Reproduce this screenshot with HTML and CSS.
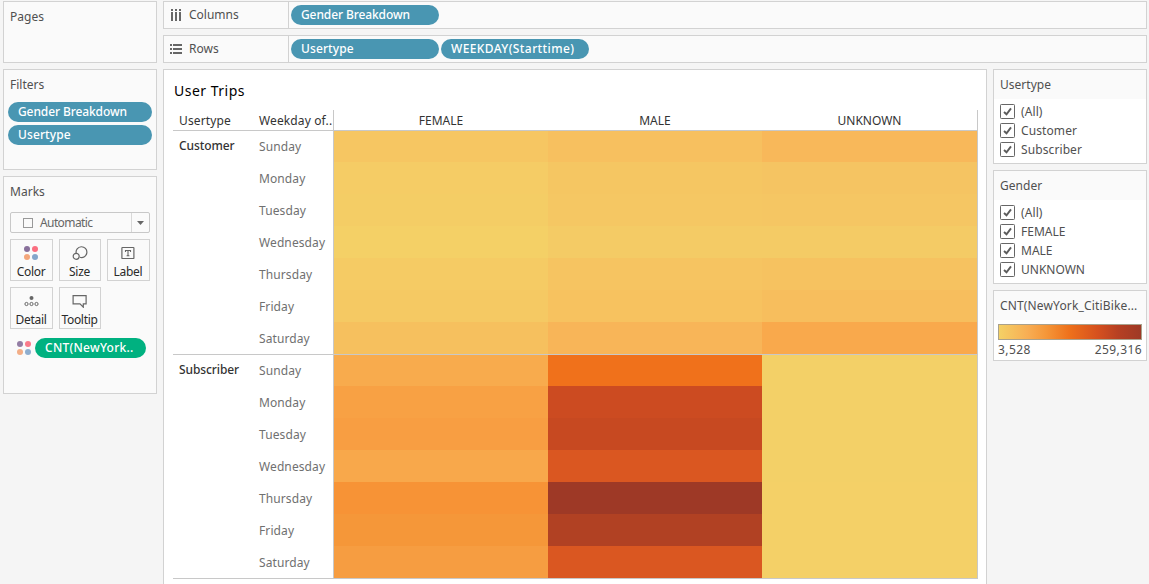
FILE: index.html
```html
<!DOCTYPE html>
<html lang="en">
<head>
<meta charset="utf-8">
<title>User Trips</title>
<link rel="stylesheet" href="styles.css">
</head>
<body>
<svg width="0" height="0" class="defs">
  <symbol id="dots" viewBox="0 0 14 14"><circle cx="3" cy="3" r="3" fill="#88709b"/><circle cx="11" cy="3" r="3" fill="#fa6e80"/><circle cx="3" cy="11" r="3" fill="#f3a67b"/><circle cx="11" cy="11" r="3" fill="#83a6cb"/></symbol>
  <symbol id="check" viewBox="0 0 15 15"><rect x=".5" y=".5" width="14" height="14" rx=".8" fill="#fff" stroke="#666"/><path d="M4 8l2.500 2.300L11 4.400" fill="none" stroke="#5c5c5c" stroke-width="1.9"/></symbol>
</svg>
<div class="app">
  <aside class="left">
    <section class="card pages"><h2>Pages</h2></section>
    <section class="card filters">
      <h2>Filters</h2>
      <div class="pill tight">Gender Breakdown</div>
      <div class="pill">Usertype</div>
    </section>
    <section class="card marks">
      <h2>Marks</h2>
      <div class="select"><span class="square"></span><span class="value">Automatic</span><span class="arrow"><svg width="7" height="4"><path d="M0 0h7L3.500 4z" fill="#666"/></svg></span></div>
      <div class="buttons">
        <div class="btn"><svg width="14" height="14"><use href="#dots"/></svg><span>Color</span></div>
        <div class="btn"><svg width="16" height="14" viewBox="0 0 16 14" fill="none" stroke="#666" stroke-width="1.2"><path d="M4.200 7.300a5.400 5.400 0 1 1 3.700 4"/><circle cx="4.200" cy="10.300" r="3"/></svg><span>Size</span></div>
        <div class="btn"><svg width="14" height="14" viewBox="0 0 14 14" fill="none" stroke="#666"><rect x=".9" y="1.5" width="12" height="11" rx=".6" stroke-width="1.2"/><path d="M4.500 6V4.500h5V6M7 4.500v5.300M5.600 9.800h2.800" stroke-width="1.100"/></svg><span>Label</span></div>
        <div class="btn"><svg width="15" height="14" viewBox="0 0 15 14" fill="none" stroke="#666"><circle cx="7.500" cy="4" r="2" fill="#666" stroke="none"/><circle cx="2.500" cy="10" r="1.600"/><circle cx="7.500" cy="10" r="1.600"/><circle cx="12.500" cy="10" r="1.600"/></svg><span>Detail</span></div>
        <div class="btn"><svg width="15" height="14" viewBox="0 0 15 14" fill="none" stroke="#666" stroke-width="1.2"><path d="M1.100 1.600h13v8.300h-2.800v3.300L8 9.900H1.100z"/></svg><span>Tooltip</span></div>
      </div>
      <div class="encoding"><svg width="14" height="14" opacity=".9"><use href="#dots"/></svg><div class="pill green">CNT(NewYork..</div></div>
    </section>
  </aside>

  <div class="work">
    <div class="shelf">
      <div class="shelf-name"><svg width="13" height="13" fill="#666"><path d="M1 0h2v2H1zM5 0h2v2H5zM9 0h2v2H9zM1 3h2v9H1zM5 3h2v9H5zM9 3h2v9H9z"/></svg>Columns</div>
      <div class="pill tight">Gender Breakdown</div>
    </div>
    <div class="shelf">
      <div class="shelf-name"><svg width="13" height="13" fill="#666"><path d="M0 1h2v2H0zM0 5h2v2H0zM0 9h2v2H0zM3 1h9v2H3zM3 5h9v2H3zM3 9h9v2H3z"/></svg>Rows</div>
      <div class="pill">Usertype</div>
      <div class="pill wide">WEEKDAY(Starttime)</div>
    </div>
    <div class="lower">
      <main class="view">
        <h1>User Trips</h1>
        <div class="table">
          <div class="head">
            <div class="type">Usertype</div><div class="day">Weekday of..</div>
            <div class="cols"><span>FEMALE</span><span>MALE</span><span>UNKNOWN</span></div>
          </div>
          <div id="groups"></div>
        </div>
      </main>
      <aside class="right">
        <section class="card legend">
          <h2>Usertype</h2>
          <ul><li><svg width="15" height="15"><use href="#check"/></svg>(All)</li><li><svg width="15" height="15"><use href="#check"/></svg>Customer</li><li><svg width="15" height="15"><use href="#check"/></svg>Subscriber</li></ul>
        </section>
        <section class="card legend">
          <h2>Gender</h2>
          <ul><li><svg width="15" height="15"><use href="#check"/></svg>(All)</li><li class="caps"><svg width="15" height="15"><use href="#check"/></svg>FEMALE</li><li class="caps"><svg width="15" height="15"><use href="#check"/></svg>MALE</li><li class="caps"><svg width="15" height="15"><use href="#check"/></svg>UNKNOWN</li></ul>
        </section>
        <section class="card legend scale">
          <h2>CNT(NewYork_CitiBike...</h2>
          <div class="ramp"></div>
          <div class="range"><span>3,528</span><span>259,316</span></div>
        </section>
      </aside>
    </div>
  </div>
</div>
<script src="heatmap.js"></script>
</body>
</html>
```
FILE: styles.css
```css
* { box-sizing: border-box; }
body { margin: 0; background: #f5f5f5; font: 12px/16px "Noto Sans", "Open Sans", sans-serif; color: #505050; overflow: hidden; }
h1, h2, ul { margin: 0; padding: 0; font-weight: 400; list-style: none; }
svg { display: block; flex: none; }
.defs { position: absolute; }
.app { display: flex; gap: 6px; width: 1149px; height: 584px; padding: 1px 2px 0 3px; overflow: hidden; }
.left { width: 154px; flex: none; display: flex; flex-direction: column; gap: 6px; }
.card { border: 1px solid #d2d2d2; background: #fafafa; }
.card h2 { font-size: 12px; line-height: 16px; padding: 7px 6px 0; letter-spacing: .02px; white-space: nowrap; }
.pages { height: 62px; }
.filters { height: 101px; }
.filters .pill { margin: 3px 4px 0; }
.filters h2 + .pill { margin-top: 9px; }
.marks { height: 218px; }
.pill { height: 20px; border-radius: 10px; background: #4996b2; color: #fff; padding: 0 10px; font-weight: 500; line-height: 19px; letter-spacing: .1px; white-space: nowrap; }
.pill.tight { letter-spacing: -.1px; }
.pill.wide { letter-spacing: .4px; }
.select { display: flex; align-items: center; height: 21px; margin: 12px 6px 0; border: 1px solid #c8c8c8; border-radius: 2px; color: #666; }
.square { width: 10px; height: 10px; border: 1px solid #999; margin-left: 12px; }
.value { flex: 1; margin-left: 7px; padding-top: 1px; letter-spacing: -.6px; }
.arrow { width: 18px; height: 19px; border-left: 1px solid #d8d8d8; display: flex; align-items: center; justify-content: center; }
.buttons { display: grid; grid-template-columns: 43px 42px 43px; column-gap: 6px; row-gap: 6px; margin: 6px 0 0 6px; }
.btn { height: 42px; border: 1px solid #d2d2d2; display: flex; flex-direction: column; align-items: center; padding: 6px 1px 0 0; color: #2a2a2a; }
.btn span { margin-top: 4px; letter-spacing: -.3px; }
.encoding { display: flex; align-items: center; margin: 9px 0 0 13px; gap: 4px; }
.green { width: 111px; background: #00b180; letter-spacing: .26px; }

.work { width: 984px; flex: none; display: flex; flex-direction: column; gap: 6px; }
.shelf { height: 28px; flex: none; display: flex; align-items: center; border: 1px solid #d2d2d2; background: #fafafa; }
.shelf-name { width: 125px; height: 26px; display: flex; align-items: center; gap: 6px; padding-left: 6px; border-right: 1px solid #d2d2d2; margin-right: 2px; font-size: 12px; letter-spacing: 0; }
.shelf .pill { width: 148px; margin-right: 2px; }
.lower { display: flex; gap: 6px; }
.view { width: 824px; height: 530px; border: 1px solid #d2d2d2; background: #fff; padding: 10px 9px 0; }
h1 { font-size: 14px; line-height: 22px; padding-left: 1px; color: #000; letter-spacing: .5px; }
.table { width: 805px; margin-top: 8px; border-bottom: 1px solid #c8c8c8; color: #707070; }
.head { display: flex; height: 20px; color: #333; line-height: 21px; }
.type { width: 80px; padding-left: 6px; flex: none; color: #333; }
.head .type, .head .day { letter-spacing: .12px; }
.day { width: 80px; padding-left: 6px; flex: none; white-space: nowrap; }
.cols { display: grid; grid-template-columns: 214px 214px 215px; width: 645px; text-align: center; border: solid #c8c8c8; border-width: 0 1px; }
.group { display: flex; border-top: 1px solid #c8c8c8; margin-bottom: -1px; height: 225px; overflow: hidden; }
.group + .group { position: relative; }
.group .type { padding-top: 7px; font-weight: 500; letter-spacing: -.1px; }
.days .day { height: 32px; line-height: 32px; letter-spacing: .1px; }
.group .cols { grid-template-rows: 31px repeat(6, 32px); }
.right { width: 154px; display: flex; flex-direction: column; gap: 6px; }
.legend { background: #fff; }
.legend h2 { height: 29px; background: #fafafa; }
.scale h2 { letter-spacing: .15px; }
.legend ul { padding: 3px 6px 4px; }
.legend li { display: flex; align-items: center; height: 19px; gap: 6px; letter-spacing: .1px; }
.legend li.caps { letter-spacing: 0; }
.scale { height: 71px; }
.ramp { height: 16px; margin: 4px 4px 0; border: 1px solid #aaa28d; background: linear-gradient(90deg, #f4d166, #f8ae54 20%, #f59739 33%, #ee701b 50%, #d5501f 70%, #b64023 84%, #9e3a26); }
.range { display: flex; justify-content: space-between; margin: 2px 4px 0; letter-spacing: .4px; }
```
FILE: heatmap.js
```js
const days = ["Sunday", "Monday", "Tuesday", "Wednesday", "Thursday", "Friday", "Saturday"];
const groups = {
  Customer: ["#f6c662 #f7c05f #f8b85a", "#f5cc65 #f5c662 #f5c462", "#f4cd65 #f5c763 #f5c663", "#f4d066 #f4cb65 #f4cb65", "#f5cb64 #f6c461 #f6c260", "#f5c963 #f7c25f #f7be5d", "#f6c05e #f8b558 #f9a94c"],
  Subscriber: ["#f8ab4d #f0711b #f3d067", "#f8a144 #cc4b21 #f3d067", "#f89e42 #c74921 #f3d067", "#f8a84b #da5721 #f3d067", "#f79336 #9e3926 #f4d067", "#f59739 #b14123 #f4d067", "#f69d41 #da5721 #f4d067"]
};
document.getElementById("groups").innerHTML = Object.entries(groups).map(([name, rows]) =>
  `<div class="group"><div class="type">${name}</div><div class="days">${days.map(d => `<div class="day">${d}</div>`).join("")}</div><div class="cols">${rows.flatMap(r => r.split(" ")).map(c => `<i style="background:${c}"></i>`).join("")}</div></div>`
).join("");
```
